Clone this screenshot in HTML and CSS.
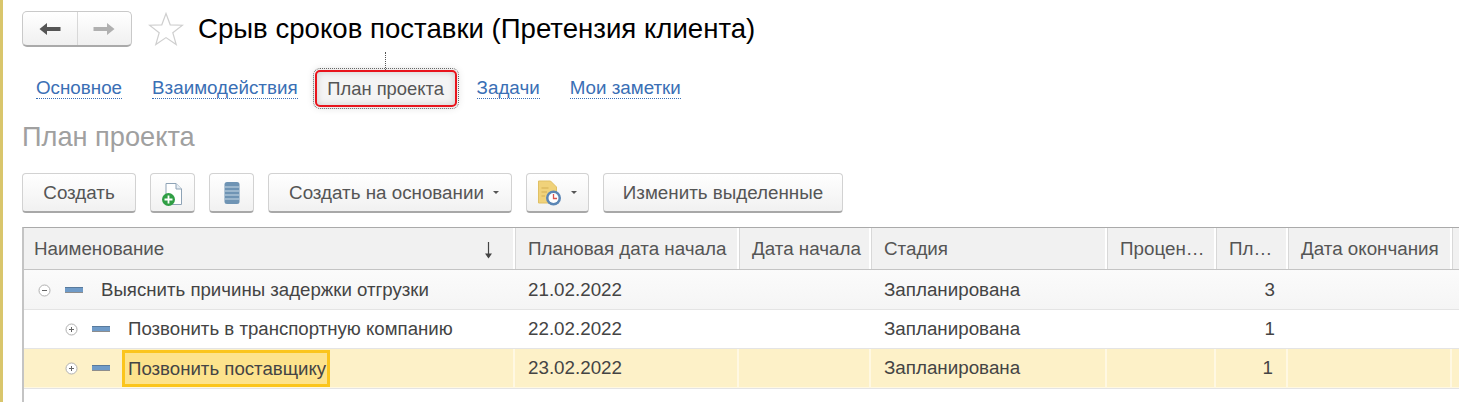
FILE: index.html
```html
<!DOCTYPE html>
<html>

<head>
    <meta charset="utf-8">
    <title>План проекта</title>
    <link rel="stylesheet" href="styles.css">
</head>

<body>
    <div class="page">
        <div class="header">
            <div class="nav-btns">
                <div class="nav-btn">
                    <svg width="22" height="14" viewBox="0 0 22 14"><path d="M0.5 7 L8 1 V5 H21.5 V9 H8 V13 Z" fill="#555"/></svg>
                </div>
                <div class="nav-btn">
                    <svg width="22" height="14" viewBox="0 0 22 14"><path d="M21.5 7 L14 1 V5 H0.5 V9 H14 V13 Z" fill="#b0b0b0"/></svg>
                </div>
            </div>
            <svg class="star" width="36" height="34" viewBox="0 0 36 34"><path d="M18 1.5 L22.2 12.8 L34.5 13.2 L24.8 20.7 L28.2 32.5 L18 25.6 L7.8 32.5 L11.2 20.7 L1.5 13.2 L13.8 12.8 Z" fill="#fff" stroke="#cfcfcf" stroke-width="1.2"/></svg>
            <h1 class="title">Срыв сроков поставки (Претензия клиента)</h1>
        </div>

        <div class="tabs">
            <a class="tab">Основное</a>
            <a class="tab">Взаимодействия</a>
            <span class="tab-active">План проекта</span>
            <a class="tab tab-after">Задачи</a>
            <a class="tab">Мои заметки</a>
        </div>

        <div class="section-title">План проекта</div>

        <div class="toolbar">
            <div class="btn btn-create">Создать</div>
            <div class="btn btn-icon">
                <svg width="22" height="26" viewBox="0 0 22 26">
                    <path d="M4 3.5 H14 L19.5 9 V24.5 H4 Z" fill="#fff" stroke="#8ea3b6" stroke-width="1"/>
                    <path d="M14 3.5 V9 H19.5" fill="#e6edf3" stroke="#8ea3b6" stroke-width="1"/>
                    <circle cx="6.5" cy="19.5" r="6.5" fill="#2f9e44"/>
                    <path d="M6.5 15.5 V23.5 M2.5 19.5 H10.5" stroke="#fff" stroke-width="1.8"/>
                </svg>
            </div>
            <div class="btn btn-icon">
                <svg width="16" height="24" viewBox="0 0 16 24">
                    <rect x="0.5" y="1" width="15" height="22" rx="2.5" fill="#6f94b4"/>
                    <path d="M1 6 H15 M1 10 H15 M1 14 H15 M1 18 H15" stroke="#c9d9e6" stroke-width="1.2"/>
                </svg>
            </div>
            <div class="btn btn-basis">Создать на основании<span class="caret"></span></div>
            <div class="btn btn-report">
                <svg width="24" height="26" viewBox="0 0 24 26">
                    <path d="M0.5 1 H12.5 L18.5 7 V23 H0.5 Z" fill="#f0d27a" stroke="#e0c064" stroke-width="1"/>
                    <path d="M3.5 8 H10.5 M3.5 12 H9 M3.5 16 H7" stroke="#d3ae52" stroke-width="1"/>
                    <circle cx="15.5" cy="18" r="7.5" fill="#5b86b5"/>
                    <circle cx="15.5" cy="18" r="5" fill="#fff"/>
                    <path d="M15.5 14 V18.5 H19" stroke="#d9534f" stroke-width="1.3" fill="none"/>
                </svg>
                <span class="caret"></span>
            </div>
            <div class="btn btn-change">Изменить выделенные</div>
        </div>

        <div class="table">
            <div class="row row-head">
                <div class="cell head-name">Наименование
                    <svg class="sort-arrow" width="9" height="17" viewBox="0 0 9 17"><path d="M4.5 0 V15" stroke="#444" stroke-width="1.2"/><path d="M1 11.5 L4.5 16.5 L8 11.5 Z" fill="#444"/></svg>
                </div>
                <div class="cell">Плановая дата начала</div>
                <div class="cell">Дата начала</div>
                <div class="cell">Стадия</div>
                <div class="cell">Процен…</div>
                <div class="cell">Пл…</div>
                <div class="cell">Дата окончания</div>
                <div class="cell"></div>
            </div>

            <div class="row row-parent">
                <div class="cell cell-name">
                    <svg class="toggle" width="13" height="13" viewBox="0 0 13 13"><circle cx="6.5" cy="6.5" r="5.5" fill="#fff" stroke="#b0b0b0"/><path d="M4 6.5 H9" stroke="#666"/></svg>
                    <span class="task-icon"></span>
                    <span class="name-text">Выяснить причины задержки отгрузки</span>
                </div>
                <div class="cell">21.02.2022</div>
                <div class="cell"></div>
                <div class="cell">Запланирована</div>
                <div class="cell"></div>
                <div class="cell cell-num">3</div>
                <div class="cell"></div>
                <div class="cell"></div>
            </div>

            <div class="row row-child">
                <div class="cell cell-name cell-child">
                    <svg class="toggle" width="13" height="13" viewBox="0 0 13 13"><circle cx="6.5" cy="6.5" r="5.5" fill="#fff" stroke="#b0b0b0"/><path d="M4 6.5 H9 M6.5 4 V9" stroke="#666"/></svg>
                    <span class="task-icon"></span>
                    <span class="name-text">Позвонить в транспортную компанию</span>
                </div>
                <div class="cell">22.02.2022</div>
                <div class="cell"></div>
                <div class="cell">Запланирована</div>
                <div class="cell"></div>
                <div class="cell cell-num">1</div>
                <div class="cell"></div>
                <div class="cell"></div>
            </div>

            <div class="row row-child row-selected">
                <div class="cell cell-name cell-child">
                    <svg class="toggle" width="13" height="13" viewBox="0 0 13 13"><circle cx="6.5" cy="6.5" r="5.5" fill="#fff" stroke="#b0b0b0"/><path d="M4 6.5 H9 M6.5 4 V9" stroke="#666"/></svg>
                    <span class="task-icon"></span>
                    <span class="name-text name-current">Позвонить поставщику</span>
                </div>
                <div class="cell">23.02.2022</div>
                <div class="cell"></div>
                <div class="cell">Запланирована</div>
                <div class="cell"></div>
                <div class="cell cell-num">1</div>
                <div class="cell"></div>
                <div class="cell"></div>
            </div>
        </div>
    </div>
</body>

</html>
```

FILE: styles.css
```css
* {
    box-sizing: border-box;
}

body {
    margin: 0;
    height: 402px;
    overflow: hidden;
    background-color: #fff;
    font-family: "Liberation Sans", Arial, sans-serif;
    color: #444;
}

.page {
    height: 402px;
    border-left: 3px solid #d9c66c;
    padding: 11px 0 0 19px;
}

/* HEADER */
.header {
    display: flex;
    align-items: center;
    height: 36px;
}

.nav-btns {
    display: flex;
    width: 110px;
    height: 36px;
    border: 1px solid #c9c9c9;
    border-bottom: 2px solid #aaa;
    border-radius: 5px;
    background: linear-gradient(#fff, #f0f0f0);
}

.nav-btn {
    flex: 1;
    display: flex;
    align-items: center;
    justify-content: center;
}

.nav-btn + .nav-btn {
    border-left: 1px solid #d8d8d8;
}

.star {
    margin-left: 16px;
}

.title {
    margin: 0 0 0 14px;
    font-size: 27.6px;
    font-weight: normal;
    color: #000;
    white-space: nowrap;
}

/* TABS */
.tabs {
    display: flex;
    align-items: center;
    height: 39px;
    margin-top: 22px;
    padding-left: 14px;
    font-size: 18.8px;
}

.tab {
    margin-right: 30px;
    color: #3a6fb5;
    border-bottom: 1px dotted #3a6fb5;
    line-height: 20px;
}

.tab-after {
    margin-left: 1px;
}

.tab-active {
    position: relative;
    height: 37px;
    line-height: 33px;
    width: 142px;
    margin: 0 19px 0 -13px;
    text-align: center;
    font-size: 18.4px;
    color: #555;
    background-color: #f4f4f4;
    border: 2px solid #e8141c;
    border-radius: 5px;
    outline: 1px dotted #666;
    outline-offset: 1px;
    box-shadow: 0 0 9px rgba(0, 0, 0, 0.16), inset 0 0 7px rgba(0, 0, 0, 0.16);
}

.tab-active::before {
    content: "";
    position: absolute;
    left: 68px;
    top: -20px;
    height: 18px;
    border-left: 1px dotted #555;
}

/* SECTION */
.section-title {
    margin-top: 13px;
    font-size: 27.2px;
    line-height: 32px;
    color: #a0a0a0;
}

/* TOOLBAR */
.toolbar {
    display: flex;
    margin-top: 20px;
    height: 40px;
}

.btn {
    display: flex;
    align-items: center;
    justify-content: center;
    height: 40px;
    margin-right: 14px;
    font-size: 18.8px;
    color: #555;
    border: 1px solid #d2d2d2;
    border-bottom: 2px solid #a8a8a8;
    border-radius: 4px;
    background: linear-gradient(#fff, #f1f1f1);
}

.btn-create {
    width: 114px;
}

.btn-icon {
    width: 45px;
}

.btn-basis {
    width: 244px;
    padding-left: 8px;
}

.btn-report {
    width: 63px;
}

.btn-change {
    width: 240px;
    margin-right: 0;
}

.caret {
    width: 0;
    height: 0;
    margin-left: 9px;
    border-left: 3.5px solid transparent;
    border-right: 3.5px solid transparent;
    border-top: 3.5px solid #555;
}

/* TABLE */
.table {
    margin-top: 14px;
    border-top: 1px solid #aaa;
    border-left: 2px solid #c4c4c4;
    font-size: 18.8px;
    height: 175px;
}

.row {
    display: grid;
    grid-template-columns: 491px 224px 132px 236px 109px 72px 164px 7px;
}

.cell {
    display: flex;
    align-items: center;
    padding-left: 13px;
    white-space: nowrap;
    overflow: hidden;
    color: #444;
}

.row-head {
    height: 42px;
    background-color: #f1f1f1;
    border-bottom: 1px solid #c4c4c4;
}

.row-head .cell {
    color: #555;
    border-right: 2px solid #fff;
    box-shadow: 1px 0 0 #d8d8d8;
}

.head-name {
    justify-content: space-between;
    padding-left: 10px;
    padding-right: 20px;
}

.sort-arrow {
    flex-shrink: 0;
    margin-top: 3px;
}

.row-parent {
    height: 40px;
    padding-top: 1px;
    background: linear-gradient(#fbfbfb, #f5f5f5);
    border-bottom: 1px solid #e4e4e4;
}

.row-child {
    height: 39px;
    border-bottom: 1px solid #e4e4e4;
}

.row-selected {
    height: 40px;
    background-color: #fdf1c8;
}

.row-selected .cell {
    border-right: 2px solid #fff8e2;
    border-bottom: 1px solid #fff8e2;
}

.cell-name {
    padding-left: 14px;
}

.cell-child {
    padding-left: 41px;
}

.cell-num {
    justify-content: flex-end;
    padding-right: 13px;
}

.toggle {
    flex-shrink: 0;
}

.task-icon {
    flex-shrink: 0;
    width: 18px;
    height: 6px;
    margin-left: 14px;
    margin-right: 18px;
    background-color: #6f9bc8;
    border-top: 1px solid #587a9c;
    border-bottom: 1px solid #8d8d8d;
}

.name-text {
    font-size: 18.65px;
}

.name-current {
    height: 37px;
    line-height: 31px;
    margin-left: -6px;
    padding: 0 1px 0 3px;
    background-color: #fde38c;
    border: 3px solid #fbc51c;
}
```
